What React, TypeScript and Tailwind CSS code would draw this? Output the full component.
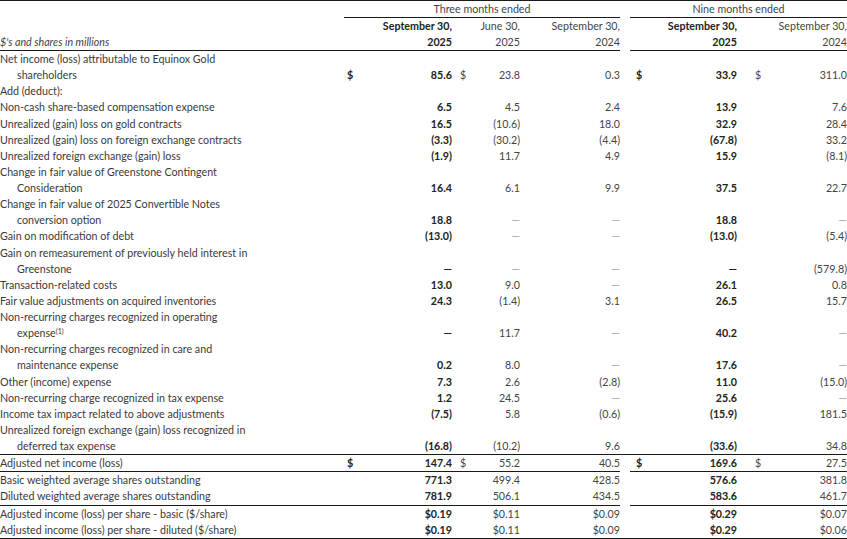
import React from 'react';

interface Row {
  label: React.ReactNode[];
  vals?: string[];
  dollar?: boolean;
  top?: 'full';
  bottom?: 'gap' | 'full';
}

const rows: Row[] = [
  { label: ['Net income (loss) attributable to Equinox Gold', 'shareholders'], vals: ['85.6', '23.8', '0.3', '33.9', '311.0'], dollar: true },
  { label: ['Add (deduct):'] },
  { label: ['Non-cash share-based compensation expense'], vals: ['6.5', '4.5', '2.4', '13.9', '7.6'] },
  { label: ['Unrealized (gain) loss on gold contracts'], vals: ['16.5', '(10.6)', '18.0', '32.9', '28.4'] },
  { label: ['Unrealized (gain) loss on foreign exchange contracts'], vals: ['(3.3)', '(30.2)', '(4.4)', '(67.8)', '33.2'] },
  { label: ['Unrealized foreign exchange (gain) loss'], vals: ['(1.9)', '11.7', '4.9', '15.9', '(8.1)'] },
  { label: ['Change in fair value of Greenstone Contingent', 'Consideration'], vals: ['16.4', '6.1', '9.9', '37.5', '22.7'] },
  { label: ['Change in fair value of 2025 Convertible Notes', 'conversion option'], vals: ['18.8', '—', '—', '18.8', '—'] },
  { label: ['Gain on modification of debt'], vals: ['(13.0)', '—', '—', '(13.0)', '(5.4)'] },
  { label: ['Gain on remeasurement of previously held interest in', 'Greenstone'], vals: ['—', '—', '—', '—', '(579.8)'] },
  { label: ['Transaction-related costs'], vals: ['13.0', '9.0', '—', '26.1', '0.8'] },
  { label: ['Fair value adjustments on acquired inventories'], vals: ['24.3', '(1.4)', '3.1', '26.5', '15.7'] },
  {
    label: [
      'Non-recurring charges recognized in operating',
      <>
        expense<sup className="text-[7px]">(1)</sup>
      </>,
    ],
    vals: ['—', '11.7', '—', '40.2', '—'],
  },
  { label: ['Non-recurring charges recognized in care and', 'maintenance expense'], vals: ['0.2', '8.0', '—', '17.6', '—'] },
  { label: ['Other (income) expense'], vals: ['7.3', '2.6', '(2.8)', '11.0', '(15.0)'] },
  { label: ['Non-recurring charge recognized in tax expense'], vals: ['1.2', '24.5', '—', '25.6', '—'] },
  { label: ['Income tax impact related to above adjustments'], vals: ['(7.5)', '5.8', '(0.6)', '(15.9)', '181.5'] },
  { label: ['Unrealized foreign exchange (gain) loss recognized in', 'deferred tax expense'], vals: ['(16.8)', '(10.2)', '9.6', '(33.6)', '34.8'] },
  { label: ['Adjusted net income (loss)'], vals: ['147.4', '55.2', '40.5', '169.6', '27.5'], dollar: true, top: 'full', bottom: 'gap' },
  { label: ['Basic weighted average shares outstanding'], vals: ['771.3', '499.4', '428.5', '576.6', '381.8'] },
  { label: ['Diluted weighted average shares outstanding'], vals: ['781.9', '506.1', '434.5', '583.6', '461.7'], bottom: 'gap' },
  { label: ['Adjusted income (loss) per share - basic ($/share)'], vals: ['$0.19', '$0.11', '$0.09', '$0.29', '$0.07'] },
  { label: ['Adjusted income (loss) per share - diluted ($/share)'], vals: ['$0.19', '$0.11', '$0.09', '$0.29', '$0.06'], bottom: 'full' },
];

// column widths and where the $ sign sits in each
const cols = [
  { w: 'w-[108px]', pl: 'pl-[3px]', bold: true, dollar: true },
  { w: 'w-[68px]', pl: 'pl-[8px]', bold: false, dollar: true },
  { w: 'w-[100px]', pl: 'pl-[6px]', bold: false, dollar: false },
  { w: 'w-[107px]', pl: 'pl-[6px]', bold: true, dollar: true },
  { w: 'w-[110px]', pl: 'pl-[18px]', bold: false, dollar: true },
];

const line = 'border-[#1a1a1a]';

function Cell({ idx, v, showDollar, gapBorder }: { idx: number; v?: string; showDollar: boolean; gapBorder: boolean }) {
  const c = cols[idx];
  const dash = v === '—';
  return (
    <div
      className={`${c.w} ${c.pl} flex items-end justify-between ${gapBorder ? `border-b ${line}` : ''} ${
        c.bold ? 'font-bold text-[#222]' : 'text-[#444]'
      }`}
    >
      <span>{showDollar && c.dollar ? '$' : ''}</span>
      <span className={dash && !c.bold ? 'text-[#a0a0a0]' : ''}>{v ?? ''}</span>
    </div>
  );
}

export default function App() {
  return (
    <div
      className="w-[847px] h-[539px] bg-white text-[#3a3a3a] text-[10.7px] leading-[16px] overflow-hidden"
      style={{ fontFamily: 'Lato, "Liberation Sans", sans-serif' }}
    >
      {/* header */}
      <div className={`border-t ${line} flex h-[18px]`}>
        <div className="w-[344px]" />
        <div className={`w-[276px] border-b ${line} text-center text-[#444]`}>Three months ended</div>
        <div className="w-[10px]" />
        <div className={`w-[217px] border-b ${line} text-center text-[#444]`}>Nine months ended</div>
      </div>
      <div className="flex">
        <div className={`w-[344px] border-b ${line} flex items-end italic text-[#444]`}>$'s and shares in millions</div>
        <div className={`w-[108px] border-b ${line} text-right font-bold text-[#222]`}>
          September 30,
          <br />
          2025
        </div>
        <div className={`w-[68px] border-b ${line} text-right text-[#444]`}>
          June 30,
          <br />
          2025
        </div>
        <div className={`w-[100px] border-b ${line} text-right text-[#444]`}>
          September 30,
          <br />
          2024
        </div>
        <div className="w-[10px]" />
        <div className={`w-[107px] border-b ${line} text-right font-bold text-[#222]`}>
          September 30,
          <br />
          2025
        </div>
        <div className={`w-[110px] border-b ${line} text-right text-[#444]`}>
          September 30,
          <br />
          2024
        </div>
      </div>

      {/* body */}
      <div className="leading-[16.125px]">
        {rows.map((r, i) => {
          const gap = r.bottom === 'gap';
          return (
            <div
              key={i}
              className={`flex ${r.top === 'full' ? `border-t ${line}` : ''} ${r.bottom === 'full' ? `border-b ${line}` : ''}`}
            >
              <div className={`w-[344px] ${gap ? `border-b ${line}` : ''}`}>
                {r.label.map((l, j) => (
                  <div key={j} className={j > 0 ? 'pl-[17px]' : ''}>
                    {l}
                  </div>
                ))}
              </div>
              {[0, 1, 2].map((k) => (
                <Cell key={k} idx={k} v={r.vals?.[k]} showDollar={!!r.dollar} gapBorder={gap} />
              ))}
              <div className="w-[10px]" />
              {[3, 4].map((k) => (
                <Cell key={k} idx={k} v={r.vals?.[k]} showDollar={!!r.dollar} gapBorder={gap} />
              ))}
            </div>
          );
        })}
      </div>
    </div>
  );
}
